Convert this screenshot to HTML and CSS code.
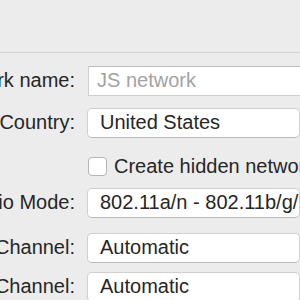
FILE: index.html
```html
<!DOCTYPE html>
<html lang="en">

<head>
    <meta charset="UTF-8">
    <meta name="viewport" content="width=device-width, initial-scale=1.0">
    <title>Network</title>
    <link rel="stylesheet" href="styles.css">
</head>

<body>
    <div class="toolbar"></div>
    <form class="settings">
        <div class="row">
            <label class="label" for="name"><span>Network name:</span></label>
            <input class="field" type="text" id="name" placeholder="JS network">
        </div>
        <div class="row">
            <div class="label"><span>Country:</span></div>
            <div class="popup">United States</div>
        </div>
        <div class="row row-check">
            <div class="label"></div>
            <label class="check"><span class="box"></span>Create hidden network</label>
        </div>
        <div class="row row-radio">
            <div class="label"><span>Radio Mode:</span></div>
            <div class="popup">802.11a/n - 802.11b/g/n</div>
        </div>
        <div class="row row-chan">
            <div class="label"><span>2.4GHz Channel:</span></div>
            <div class="popup">Automatic</div>
        </div>
        <div class="row row-chan2">
            <div class="label"><span>5GHz Channel:</span></div>
            <div class="popup">Automatic</div>
        </div>
    </form>
</body>

</html>
```

FILE: styles.css
```css
html,
body {
    margin: 0;
    padding: 0;
    background-color: #ececec;
    overflow: hidden;
}

body {
    font-family: "Liberation Sans", Arial, sans-serif;
    font-size: 20px;
    color: #262626;
    width: 300px;
    height: 300px;
}

.toolbar {
    height: 52px;
    border-bottom: 1px solid #d3d3d3;
}

.settings {
    display: flex;
    flex-direction: column;
    padding-top: 13px;
}

.row {
    display: flex;
    align-items: center;
    height: 29px;
    margin-bottom: 13px;
}

.row-check {
    height: 18px;
    margin-top: 7px;
    margin-bottom: 13px;
}

.row-radio {
    margin-bottom: 16px;
}

.row-chan {
    margin-bottom: 10px;
}

.label {
    display: flex;
    justify-content: flex-end;
    width: 75px;
    flex-shrink: 0;
    margin-right: 12px;
    white-space: nowrap;
}

.field {
    box-sizing: border-box;
    height: 30px;
    width: 240px;
    margin: 0 0 0 1px;
    padding: 0 8px;
    border: 1px solid #cfcfcf;
    border-top-color: #bdbdbd;
    border-radius: 0;
    background: #fff;
    font: inherit;
    color: #262626;
    outline: none;
}

.field::placeholder {
    color: #a3a3a3;
}

.popup {
    box-sizing: border-box;
    height: 30px;
    width: 240px;
    padding: 0 12px;
    display: flex;
    align-items: center;
    background: #fff;
    border: 1px solid #d0d0d0;
    border-bottom-color: #b8b8b8;
    border-radius: 5px;
    white-space: nowrap;
    overflow: hidden;
}

.check {
    display: flex;
    align-items: center;
    white-space: nowrap;
    margin-left: 1px;
}

.box {
    box-sizing: border-box;
    width: 19px;
    height: 19px;
    margin-right: 7px;
    background: #fff;
    border: 1px solid #b4b4b4;
    border-radius: 4px;
    flex-shrink: 0;
}
```
